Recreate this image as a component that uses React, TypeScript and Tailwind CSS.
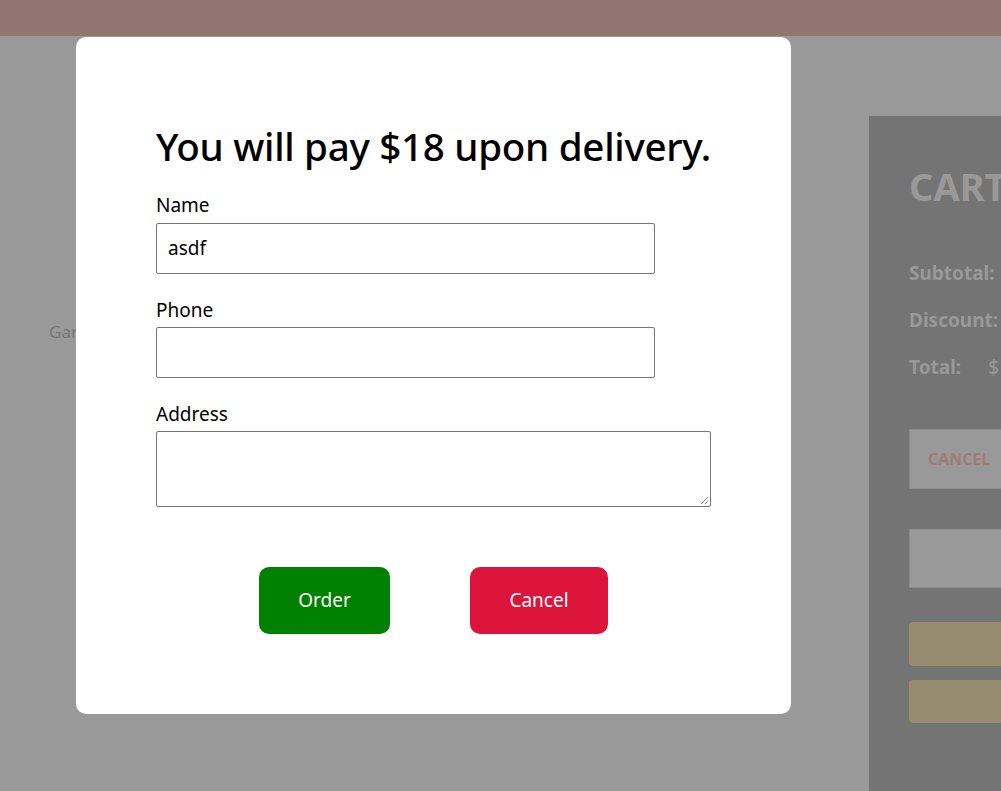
import React from "react";

export default function App() {
  const font = { fontFamily: '"Noto Sans", "Open Sans", sans-serif' };
  return (
    <div className="relative w-full h-[791px] overflow-hidden bg-[#999999]" style={font}>
      {/* underlying dimmed page */}
      <div className="h-[36px] bg-[#927470]" />
      <div className="flex">
        <div className="w-[869px] shrink-0 pt-[283px] pl-[49px]">
          <span className="text-[17px] text-[#777777]">Garden</span>
        </div>
        <div className="w-[400px] shrink-0 mt-[80px] h-[700px] bg-[#747474] pl-[40px] pt-[51px]">
          <div className="text-[38px] font-bold text-[#999999] leading-none">CART</div>
          <div className="mt-[58px] flex flex-col gap-[27px] text-[19px] font-bold text-[#999999] leading-[20px]">
            <div>Subtotal:</div>
            <div>Discount:</div>
            <div className="flex gap-[27px]">
              <span>Total:</span>
              <span className="font-normal">$18</span>
            </div>
          </div>
          <div className="mt-[52px] w-[200px] h-[60px] bg-[#999999] border border-[#8c8c8c] flex items-center pl-[18px] text-[16px] font-bold text-[#a07c76]">
            CANCEL
          </div>
          <div className="mt-[40px] w-[200px] h-[59px] bg-[#999999] border border-[#8c8c8c]" />
          <div className="mt-[34px] w-[200px] h-[44px] rounded-[4px] bg-[#978b70]" />
          <div className="mt-[14px] w-[200px] h-[43px] rounded-[4px] bg-[#978b70]" />
        </div>
      </div>

      {/* modal */}
      <div className="absolute left-[76px] top-[37px] w-[715px] h-[677px] bg-white rounded-[10px] pl-[80px] pt-[83px]">
        <h1 className="text-[38.6px] leading-[52px] font-medium text-black tracking-[-0.3px] whitespace-nowrap">
          You will pay $18 upon delivery.
        </h1>
        <div className="mt-[20px] flex flex-col">
          <label className="text-[19px] leading-[26px] text-black">Name</label>
          <div className="mt-[5px] w-[499px] h-[51px] border border-[#767676] rounded-[2px] flex items-center pl-[11px] text-[19px] text-black">
            asdf
          </div>
          <label className="mt-[23px] text-[19px] leading-[26px] text-black">Phone</label>
          <div className="mt-[4px] w-[499px] h-[51px] border border-[#767676] rounded-[2px]" />
          <label className="mt-[23px] text-[19px] leading-[26px] text-black">Address</label>
          <div className="relative mt-[4px] w-[555px] h-[76px] border border-[#767676] rounded-[2px]">
            <svg className="absolute right-[1px] bottom-[1px]" width="9" height="9" viewBox="0 0 9 9">
              <line x1="8" y1="1" x2="1" y2="8" stroke="#888" strokeWidth="1" />
              <line x1="8" y1="5" x2="5" y2="8" stroke="#888" strokeWidth="1" />
            </svg>
          </div>
        </div>
        <div className="mt-[60px] flex pl-[103px] gap-[80px]">
          <button className="w-[131px] h-[67px] rounded-[10px] bg-[#008000] text-white text-[19px]">Order</button>
          <button className="w-[138px] h-[67px] rounded-[10px] bg-[#dc143c] text-white text-[19px]">Cancel</button>
        </div>
      </div>
    </div>
  );
}
